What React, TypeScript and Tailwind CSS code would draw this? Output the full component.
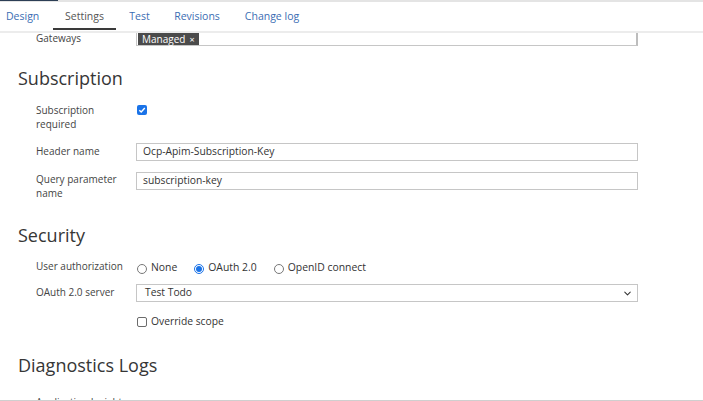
import { ChevronDown } from "lucide-react";

const font = { fontFamily: '"Open Sans", "Noto Sans", sans-serif' };

// small building blocks for the settings form
function Label({ children, pt = "pt-[1px]" }: { children: React.ReactNode; pt?: string }) {
  return <div className={`w-[100px] shrink-0 pr-2 text-[10px] leading-[14px] text-[#444] ${pt}`}>{children}</div>;
}

function TextBox({ value, h = "h-[18px]" }: { value: string; h?: string }) {
  return (
    <div className={`w-[502px] ${h} border border-[#c6c6c6] bg-white flex items-center pl-[6px] text-[10.3px] text-[#333]`}>
      {value}
    </div>
  );
}

function Check({ checked }: { checked?: boolean }) {
  return checked ? (
    <span className="block w-[10px] h-[10px] rounded-[2px] bg-[#1a73e8] flex items-center justify-center">
      <svg width="8" height="8" viewBox="0 0 8 8">
        <path d="M1.3 4.2 L3.2 6 L6.8 2" stroke="white" strokeWidth="1.4" fill="none" />
      </svg>
    </span>
  ) : (
    <span className="block w-[10px] h-[10px] rounded-[2px] border border-[#6b6b6b] bg-white" />
  );
}

function Radio({ checked, label }: { checked?: boolean; label: string }) {
  return (
    <div className="flex items-center gap-[4px]">
      <span
        className={`w-[10px] h-[10px] rounded-full border flex items-center justify-center mt-[3px] ${
          checked ? "border-[#1a73e8]" : "border-[#777]"
        }`}
      >
        {checked && <span className="w-[6px] h-[6px] rounded-full bg-[#1a73e8]" />}
      </span>
      <span>{label}</span>
    </div>
  );
}

export default function App() {
  const tabs = [
    { name: "Design", w: "w-[51px] pl-[6px] text-left", active: false },
    { name: "Settings", w: "w-[63px] text-center", active: true },
    { name: "Test", w: "w-[43px] text-center", active: false },
    { name: "Revisions", w: "w-[68px] text-center", active: false },
    { name: "Change log", w: "w-[78px] text-center", active: false },
  ];

  return (
    <div className="w-[703px] h-[401px] bg-white overflow-hidden flex flex-col" style={font}>
      {/* top strip */}
      <div className="h-[2px] bg-[#e4e4e4] shrink-0">
        <div className="w-[58px] h-[1px] bg-[#2c3e55]" />
      </div>

      {/* TABS */}
      <div className="h-[29px] shrink-0 flex gap-[2px] text-[10.5px]">
        {tabs.map((t) => (
          <div key={t.name} className={`${t.w} flex flex-col`}>
            <div className={`flex-1 pt-[7px] ${t.active ? "text-[#555]" : "text-[#3b6db3]"}`}>{t.name}</div>
            <div className={`h-[2px] mb-[1px] ${t.active ? "bg-[#3a3a3a]" : ""}`} />
          </div>
        ))}
      </div>
      <div className="h-[2px] bg-[#ececec] shrink-0" />

      {/* SCROLLED CONTENT */}
      <div className="flex-1 overflow-hidden">
        <div className="-mt-[6px]">
          {/* Gateways */}
          <div className="flex pl-[36px]">
            <Label pt="pt-[4px] leading-[10px]">Gateways</Label>
            <div className="w-[502px] h-[19px] border border-[#c6c6c6] border-r-2 border-r-[#bdbdbd] flex items-end pl-[1px]">
              <span className="inline-flex items-center h-[12px] px-[4px] bg-[#4b4b4b] text-white text-[10px] leading-none">
                Managed <span className="ml-[4px] text-[9px]">×</span>
              </span>
            </div>
          </div>

          {/* Subscription */}
          <h2 className="pl-[18px] mt-[19px] text-[18px] leading-[26px] text-[#363636] font-normal">Subscription</h2>

          <div className="flex pl-[36px] mt-[12px] h-[28px]">
            <Label pt="pt-0">
              Subscription
              <br />
              required
            </Label>
            <div className="pt-[2px] pl-[1px]">
              <Check checked />
            </div>
          </div>

          <div className="flex pl-[36px] mt-[12px]">
            <Label>Header name</Label>
            <TextBox value="Ocp-Apim-Subscription-Key" />
          </div>

          <div className="flex pl-[36px] mt-[11px] h-[28px]">
            <Label pt="pt-0">
              Query parameter
              <br />
              name
            </Label>
            <TextBox value="subscription-key" />
          </div>

          {/* Security */}
          <h2 className="pl-[18px] mt-[22px] text-[18px] leading-[26px] text-[#363636] font-normal">Security</h2>

          <div className="flex pl-[36px] mt-[11px] h-[14px] items-start">
            <Label pt="pt-0">User authorization</Label>
            <div className="flex gap-[17px] pl-[1px] text-[10.4px] leading-[14px] text-[#333] mt-[1px]">
              <Radio label="None" />
              <Radio checked label="OAuth 2.0" />
              <Radio label="OpenID connect" />
            </div>
          </div>

          <div className="flex pl-[36px] mt-[11px]">
            <Label>OAuth 2.0 server</Label>
            <div className="w-[502px] h-[18px] border border-[#c6c6c6] bg-white flex items-center justify-between pl-[8px] pr-[4px] text-[10.3px] text-[#333]">
              <span>Test Todo</span>
              <ChevronDown size={11} strokeWidth={2.2} className="text-[#333]" />
            </div>
          </div>

          <div className="flex pl-[136px] mt-[13px] h-[14px] items-center gap-[4px] text-[10.3px] text-[#333]">
            <span className="pl-[1px]">
              <Check />
            </span>
            <span>Override scope</span>
          </div>

          {/* Diagnostics Logs */}
          <h2 className="pl-[18px] mt-[23px] text-[18px] leading-[26px] text-[#363636] font-normal">Diagnostics Logs</h2>

          <div className="flex pl-[36px] mt-[17px]">
            <Label pt="pt-0">Application Insights</Label>
          </div>
        </div>
      </div>
      <div className="h-[1px] bg-[#cfcfcf] shrink-0" />
    </div>
  );
}
